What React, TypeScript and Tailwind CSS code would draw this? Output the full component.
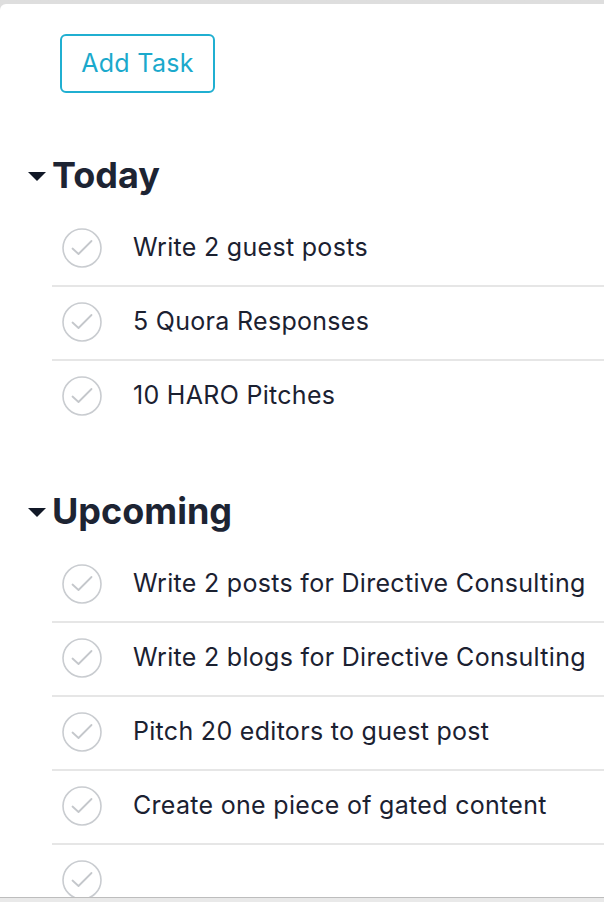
import React from "react";

const CheckCircle = () => (
  <svg width="40" height="40" viewBox="0 0 40 40" className="shrink-0">
    <circle cx="20" cy="20" r="19" fill="none" stroke="#c9ccd0" strokeWidth="1.6" />
    <path d="M10.5 20.5 L16.5 26 L29.5 13" fill="none" stroke="#c4c7cb" strokeWidth="1.8" strokeLinecap="round" strokeLinejoin="round" />
  </svg>
);

const Row = ({ text, divider }: { text: string; divider: boolean }) => (
  <div className={divider ? "border-b-2 border-[#e6e6e6]" : ""}>
    <div className="h-[72px] flex items-start pt-[15px] pl-[10px]">
      <CheckCircle />
      <span className="ml-[31px] text-[25px] tracking-[0.3px] leading-[39px] text-[#1b2131]">{text}</span>
    </div>
  </div>
);

const Section = ({ title, items, last }: { title: string; items: string[]; last?: boolean }) => (
  <div>
    <div className="flex items-center h-[40px] pt-[2px] pl-[28px]">
      <svg width="18" height="9" viewBox="0 0 18 9" className="mr-[6px] mt-[2px]">
        <path d="M0 0 L18 0 L9 9 Z" fill="#111827" />
      </svg>
      <h2 className="text-[36px] leading-none font-bold text-[#1d2433]">{title}</h2>
    </div>
    <div className="mt-[19px] ml-[52px]">
      {items.map((t, i) => (
        <Row key={i} text={t} divider={last ? true : i < items.length - 1} />
      ))}
    </div>
  </div>
);

export default function App() {
  return (
    <div
      className="w-[604px] h-[902px] flex flex-col bg-gradient-to-b from-[#dedede] to-[#ececec] overflow-hidden"
      style={{ fontFamily: "Inter, 'Open Sans', Arial, sans-serif" }}
    >
      <div className="h-[4px] shrink-0" />
      <div className="flex-1 bg-white rounded-tl-[6px] overflow-hidden">
        <div className="pt-[30px] pl-[60px]">
          <button className="w-[155px] h-[59px] border-2 border-[#20afd1] rounded-[6px] text-[25px] tracking-[0.3px] text-[#1ba9cc] flex items-center justify-center">
            Add Task
          </button>
        </div>
        <div className="mt-[61px]">
          <Section title="Today" items={["Write 2 guest posts", "5 Quora Responses", "10 HARO Pitches"]} />
        </div>
        <div className="mt-[57px]">
          <Section
            title="Upcoming"
            last
            items={[
              "Write 2 posts for Directive Consulting",
              "Write 2 blogs for Directive Consulting",
              "Pitch 20 editors to guest post",
              "Create one piece of gated content",
              "",
            ]}
          />
        </div>
      </div>
      <div className="h-[5px] shrink-0 border-t border-[#bdbdbd] bg-[#e9e9e9]" />
    </div>
  );
}
